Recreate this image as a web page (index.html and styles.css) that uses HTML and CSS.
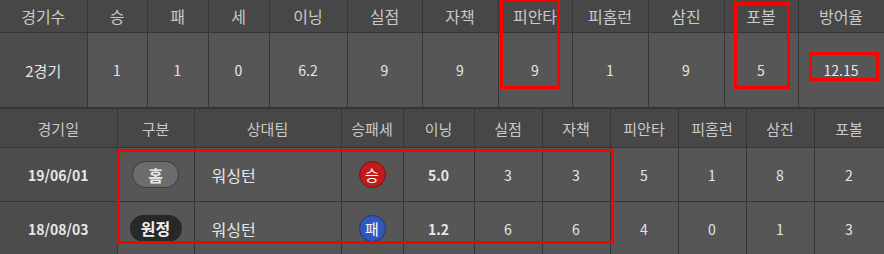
FILE: index.html
```html
<!DOCTYPE html>
<html lang="ko">
<head>
<meta charset="utf-8">
<link rel="stylesheet" href="styles.css">
</head>
<body>
<div class="wrap">
  <table class="summary">
    <colgroup>
      <col style="width:87px"><col style="width:60px"><col style="width:61px"><col style="width:61px"><col style="width:78px"><col style="width:75px"><col style="width:76px"><col style="width:74px"><col style="width:76px"><col style="width:76px"><col style="width:74px"><col style="width:86px">
    </colgroup>
    <thead>
      <tr><th>경기수</th><th>승</th><th>패</th><th>세</th><th>이닝</th><th>실점</th><th>자책</th><th>피안타</th><th>피홈런</th><th>삼진</th><th>포볼</th><th>방어율</th></tr>
    </thead>
    <tbody>
      <tr><td>2경기</td><td>1</td><td>1</td><td>0</td><td>6.2</td><td>9</td><td>9</td><td>9</td><td>1</td><td>9</td><td>5</td><td>12.15</td></tr>
    </tbody>
  </table>
  <table class="games">
    <colgroup>
      <col style="width:117px"><col style="width:77px"><col style="width:147px"><col style="width:62px"><col style="width:71px"><col style="width:68px"><col style="width:68px"><col style="width:68px"><col style="width:68px"><col style="width:68px"><col style="width:70px">
    </colgroup>
    <thead>
      <tr><th>경기일</th><th>구분</th><th>상대팀</th><th>승패세</th><th>이닝</th><th>실점</th><th>자책</th><th>피안타</th><th>피홈런</th><th>삼진</th><th>포볼</th></tr>
    </thead>
    <tbody>
      <tr><td class="b">19/06/01</td><td><span class="pill home">홈</span></td><td class="team">워싱턴</td><td><span class="dot win">승</span></td><td class="b">5.0</td><td>3</td><td>3</td><td>5</td><td>1</td><td>8</td><td>2</td></tr>
      <tr><td class="b">18/08/03</td><td><span class="pill away">원정</span></td><td class="team">워싱턴</td><td><span class="dot loss">패</span></td><td class="b">1.2</td><td>6</td><td>6</td><td>4</td><td>0</td><td>1</td><td>3</td></tr>
    </tbody>
  </table>
  <div class="mark m1"></div>
  <div class="mark m2"></div>
  <div class="mark m3"></div>
  <div class="mark m4"></div>
</div>
</body>
</html>
```
FILE: styles.css
```css
html, body {
  margin: 0;
  padding: 0;
  background: #555555;
}
body {
  font-family: "Noto Sans CJK KR", "Noto Sans", sans-serif;
  color: #e6e6e6;
}
.wrap {
  position: relative;
  width: 884px;
  height: 254px;
  overflow: hidden;
}
table {
  border-collapse: collapse;
  table-layout: fixed;
  width: 884px;
}
th, td {
  border: 1px solid #353535;
  text-align: center;
  padding: 0;
  white-space: nowrap;
}
th {
  background: #474747;
  color: #c9c9c9;
  font-weight: normal;
}
td {
  background: #565656;
}
.summary th {
  height: 32px;
  font-size: 16px;
  border-top: none;
}
.summary td {
  height: 74px;
  font-size: 14px;
}
.summary tr > :first-child { border-left: none; }
.summary td:first-child { background: #4c4c4c; font-size: 15px; }
.games th {
  height: 38px;
  font-size: 15px;
}
.games td {
  height: 53px;
  font-size: 14px;
}
.games tr > :first-child { border-left: none; }
.games td:first-child { background: #4c4c4c; }
.b { font-weight: bold; }
.games td.team {
  text-align: left;
  padding-left: 17px;
  font-size: 16px;
}
.pill {
  display: inline-block;
  width: 47px;
  height: 27px;
  line-height: 26px;
  border-radius: 14px;
  font-size: 16px;
  font-weight: bold;
  box-sizing: border-box;
}
.pill.home {
  background: #6c6c6c;
  border: 1px solid #3c3c3c;
  color: #e8e8e8;
}
.pill.away {
  background: #282828;
  color: #f0f0f0;
  width: 52px;
}
.dot {
  display: inline-block;
  width: 27px;
  height: 27px;
  line-height: 26px;
  border-radius: 50%;
  font-size: 15px;
  color: #fff;
  box-sizing: border-box;
  vertical-align: middle;
}
.dot.win { background: #c21b1b; border: 1px solid #7a1010; }
.dot.loss { background: #2f57bd; border: 1px solid #1d367a; }
.mark {
  position: absolute;
  border: 3px solid #ff0000;
  box-sizing: border-box;
}
.m1 { left: 500px; top: -2px; width: 60px; height: 91px; }
.m2 { left: 734px; top: 2px; width: 56px; height: 87px; }
.m3 { left: 809px; top: 52px; width: 70px; height: 29px; }
.m4 { left: 117px; top: 149px; width: 497px; height: 95px; }
```
